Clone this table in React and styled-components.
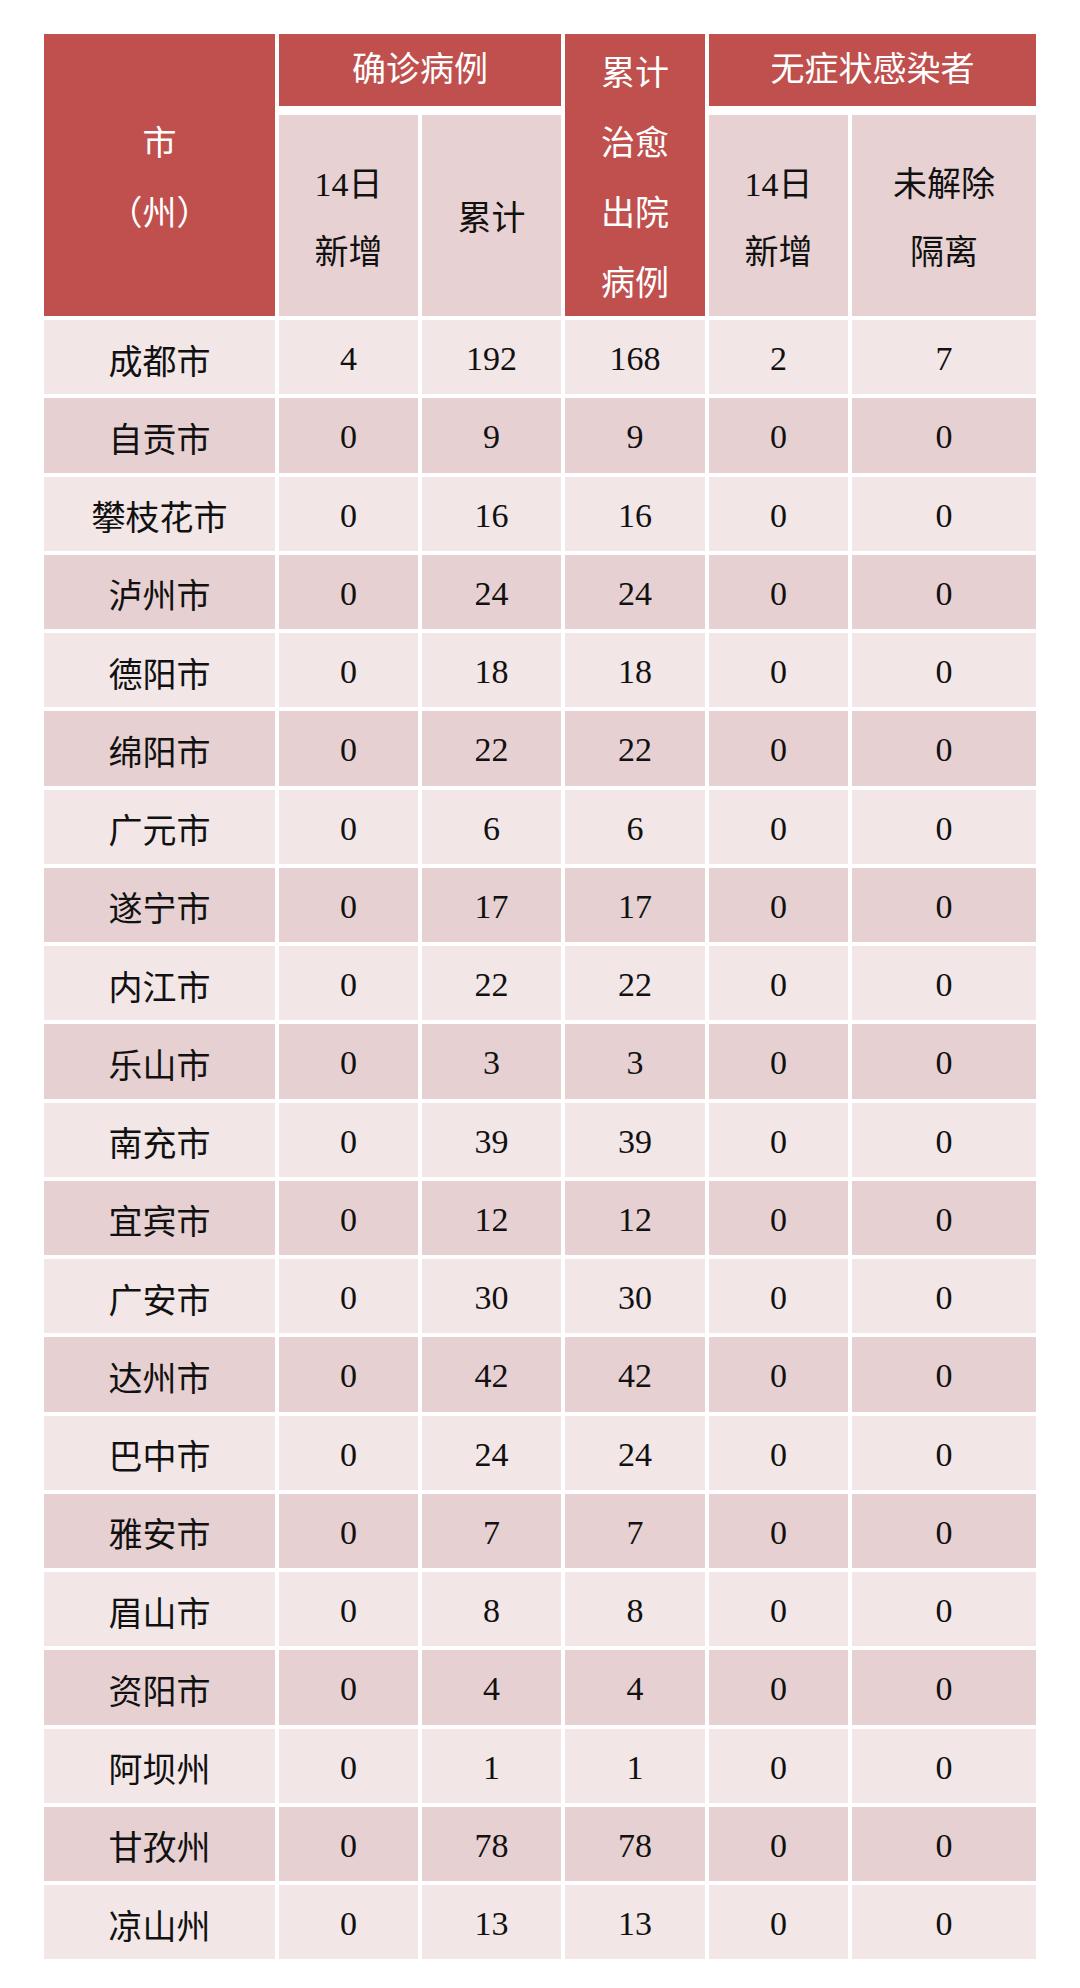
import React from "react";
import styled, { createGlobalStyle } from "styled-components";

const GlobalStyle = createGlobalStyle`
  html, body {
    margin: 0;
    padding: 0;
    background: #fff;
  }
  body {
    font-family: "Liberation Serif", "Noto Sans CJK SC", serif;
  }
`;

const COLS = "231px 139px 139px 140px 139px 184px";

const Page = styled.div`
  min-height: 1988px;
  padding: 34px 0 0 44px;
  box-sizing: border-box;
  display: flex;
  flex-direction: column;
  gap: 4px;
`;

const Header = styled.div`
  display: grid;
  grid-template-columns: ${COLS};
  grid-template-rows: 72px 201px;
  column-gap: 4px;
  row-gap: 9px;
  width: 992px;
`;

const HeadCell = styled.div`
  display: flex;
  flex-direction: column;
  align-items: center;
  justify-content: center;
  background: ${(p) => (p.$sub ? "#e8d1d2" : "#c0504d")};
  color: ${(p) => (p.$sub ? "#111" : "#fff")};
  font-size: 34px;
  line-height: ${(p) => (p.$lh ? p.$lh : 70)}px;
  grid-column: ${(p) => p.$col || "auto"};
  grid-row: ${(p) => p.$row || "auto"};
  padding-top: ${(p) => (p.$pt ? p.$pt : 0)}px;
  box-sizing: border-box;
`;

const Body = styled.div`
  display: flex;
  flex-direction: column;
  gap: 4px;
  width: 992px;
`;

const Row = styled.div`
  display: grid;
  grid-template-columns: ${COLS};
  column-gap: 4px;
  height: 74.25px;
`;

const Cell = styled.div`
  display: flex;
  align-items: center;
  justify-content: center;
  padding-top: 4px;
  box-sizing: border-box;
  background: ${(p) => (p.$dark ? "#e7d0d1" : "#f2e6e7")};
  color: #111;
  font-size: 34px;
`;

const rows = [
  ["成都市", 4, 192, 168, 2, 7],
  ["自贡市", 0, 9, 9, 0, 0],
  ["攀枝花市", 0, 16, 16, 0, 0],
  ["泸州市", 0, 24, 24, 0, 0],
  ["德阳市", 0, 18, 18, 0, 0],
  ["绵阳市", 0, 22, 22, 0, 0],
  ["广元市", 0, 6, 6, 0, 0],
  ["遂宁市", 0, 17, 17, 0, 0],
  ["内江市", 0, 22, 22, 0, 0],
  ["乐山市", 0, 3, 3, 0, 0],
  ["南充市", 0, 39, 39, 0, 0],
  ["宜宾市", 0, 12, 12, 0, 0],
  ["广安市", 0, 30, 30, 0, 0],
  ["达州市", 0, 42, 42, 0, 0],
  ["巴中市", 0, 24, 24, 0, 0],
  ["雅安市", 0, 7, 7, 0, 0],
  ["眉山市", 0, 8, 8, 0, 0],
  ["资阳市", 0, 4, 4, 0, 0],
  ["阿坝州", 0, 1, 1, 0, 0],
  ["甘孜州", 0, 78, 78, 0, 0],
  ["凉山州", 0, 13, 13, 0, 0],
];

export default function App() {
  return (
    <>
      <GlobalStyle />
      <Page>
        <Header>
          <HeadCell $col="1" $row="1 / span 2" $pt={8}>
            <span>市</span>
            <span>（州）</span>
          </HeadCell>
          <HeadCell $col="2 / span 2" $row="1">确诊病例</HeadCell>
          <HeadCell $col="4" $row="1 / span 2" $pt={8}>
            <span>累计</span>
            <span>治愈</span>
            <span>出院</span>
            <span>病例</span>
          </HeadCell>
          <HeadCell $col="5 / span 2" $row="1">无症状感染者</HeadCell>
          <HeadCell $sub $col="2" $row="2" $lh={68} $pt={6}>
            <span>14日</span>
            <span>新增</span>
          </HeadCell>
          <HeadCell $sub $col="3" $row="2" $pt={6}>累计</HeadCell>
          <HeadCell $sub $col="5" $row="2" $lh={68} $pt={6}>
            <span>14日</span>
            <span>新增</span>
          </HeadCell>
          <HeadCell $sub $col="6" $row="2" $lh={68} $pt={6}>
            <span>未解除</span>
            <span>隔离</span>
          </HeadCell>
        </Header>
        <Body>
          {rows.map((r, i) => (
            <Row key={r[0]}>
              {r.map((v, j) => (
                <Cell key={j} $dark={i % 2 === 1}>
                  {v}
                </Cell>
              ))}
            </Row>
          ))}
        </Body>
      </Page>
    </>
  );
}
